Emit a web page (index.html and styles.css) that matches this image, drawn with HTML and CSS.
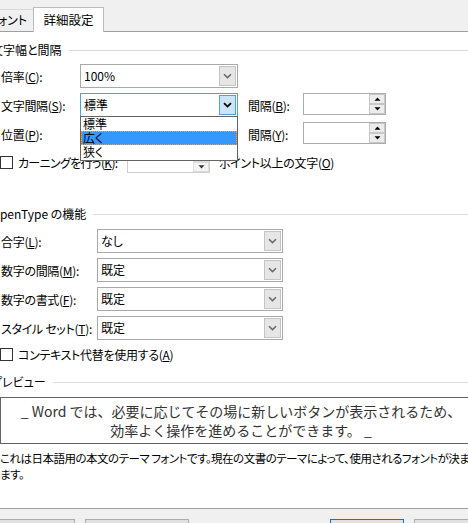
FILE: index.html
```html
<!DOCTYPE html>
<html lang="ja">
<head>
<meta charset="utf-8">
<title>フォント - 詳細設定</title>
<link rel="stylesheet" href="styles.css">
</head>
<body>
<div class="dialog">
  <div class="tabs">
    <div class="tab first">フォント</div>
    <div class="tab active">詳細設定</div>
  </div>

  <div class="panel">
    <div class="heading"><span>文字幅と間隔</span></div>

    <div class="row r-first">
      <span class="lbl w1">倍率(<u>C</u>):</span>
      <div class="combo c1"><span class="val">100%</span><span class="btn"><svg width="9" height="6" viewBox="0 0 9 6"><path d="M1 1.2 L4.5 4.6 L8 1.2" fill="none" stroke="#6b6b6b" stroke-width="1.6"/></svg></span></div>
    </div>

    <div class="row">
      <span class="lbl w1">文字間隔(<u>S</u>):</span>
      <div class="combo c1 focus"><span class="val">標準</span><span class="btn"><svg width="9" height="6" viewBox="0 0 9 6"><path d="M1 1.2 L4.5 4.6 L8 1.2" fill="none" stroke="#000" stroke-width="1.8"/></svg></span>
        <ul class="list">
          <li>標準</li>
          <li class="sel">広く</li>
          <li>狭く</li>
        </ul>
      </div>
      <span class="lbl w2">間隔(<u>B</u>):</span>
      <div class="spin">
        <span class="spinbtns">
          <span class="sb"><svg width="7" height="4" viewBox="0 0 7 4"><path d="M0.5 3.8 L3.5 0.5 L6.5 3.8Z" fill="#000"/></svg></span>
          <span class="sb"><svg width="7" height="4" viewBox="0 0 7 4"><path d="M0.5 0.2 L3.5 3.5 L6.5 0.2Z" fill="#000"/></svg></span>
        </span>
      </div>
    </div>

    <div class="row">
      <span class="lbl w1">位置(<u>P</u>):</span>
      <div class="combo c1"><span class="val">標準</span><span class="btn"><svg width="9" height="6" viewBox="0 0 9 6"><path d="M1 1.2 L4.5 4.6 L8 1.2" fill="none" stroke="#6b6b6b" stroke-width="1.6"/></svg></span></div>
      <span class="lbl w2">間隔(<u>Y</u>):</span>
      <div class="spin">
        <span class="spinbtns">
          <span class="sb"><svg width="7" height="4" viewBox="0 0 7 4"><path d="M0.5 3.8 L3.5 0.5 L6.5 3.8Z" fill="#000"/></svg></span>
          <span class="sb"><svg width="7" height="4" viewBox="0 0 7 4"><path d="M0.5 0.2 L3.5 3.5 L6.5 0.2Z" fill="#000"/></svg></span>
        </span>
      </div>
    </div>

    <div class="row kern">
      <span class="checklabel"><span class="check"></span><span class="kt">カーニングを行う(<u>K</u>):</span></span>
      <div class="spin disabled">
        <span class="spinbtns">
          <span class="sb"><svg width="7" height="4" viewBox="0 0 7 4"><path d="M0.5 3.8 L3.5 0.5 L6.5 3.8Z" fill="#333"/></svg></span>
          <span class="sb"><svg width="7" height="4" viewBox="0 0 7 4"><path d="M0.5 0.2 L3.5 3.5 L6.5 0.2Z" fill="#333"/></svg></span>
        </span>
      </div>
      <span class="pt">ポイント以上の文字(<u>O</u>)</span>
    </div>

    <div class="heading h2"><span>OpenType の機能</span></div>

    <div class="row r-first2">
      <span class="lbl w3">合字(<u>L</u>):</span>
      <div class="combo c2"><span class="val">なし</span><span class="btn"><svg width="9" height="6" viewBox="0 0 9 6"><path d="M1 1.2 L4.5 4.6 L8 1.2" fill="none" stroke="#6b6b6b" stroke-width="1.6"/></svg></span></div>
    </div>
    <div class="row">
      <span class="lbl w3">数字の間隔(<u>M</u>):</span>
      <div class="combo c2"><span class="val">既定</span><span class="btn"><svg width="9" height="6" viewBox="0 0 9 6"><path d="M1 1.2 L4.5 4.6 L8 1.2" fill="none" stroke="#6b6b6b" stroke-width="1.6"/></svg></span></div>
    </div>
    <div class="row">
      <span class="lbl w3">数字の書式(<u>F</u>):</span>
      <div class="combo c2"><span class="val">既定</span><span class="btn"><svg width="9" height="6" viewBox="0 0 9 6"><path d="M1 1.2 L4.5 4.6 L8 1.2" fill="none" stroke="#6b6b6b" stroke-width="1.6"/></svg></span></div>
    </div>
    <div class="row">
      <span class="lbl w3">スタイル セット(<u>T</u>):</span>
      <div class="combo c2"><span class="val">既定</span><span class="btn"><svg width="9" height="6" viewBox="0 0 9 6"><path d="M1 1.2 L4.5 4.6 L8 1.2" fill="none" stroke="#6b6b6b" stroke-width="1.6"/></svg></span></div>
    </div>

    <div class="ctx"><span class="check"></span>コンテキスト代替を使用する(<u>A</u>)</div>

    <div class="heading h3"><span>プレビュー</span></div>

    <div class="preview">
      <div>_ Word では、必要に応じてその場に新しいボタンが表示されるため、</div>
      <div>効率よく操作を進めることができます。 _</div>
    </div>

    <div class="desc">
      <div>これは日本語用の本文のテーマ フォントです。現在の文書のテーマによって、使用されるフォントが決まり</div>
      <div>ます。</div>
    </div>
  </div>

  <div class="footer">
    <button class="b b1" type="button"></button>
    <button class="b b2" type="button"></button>
    <button class="b b3" type="button"></button>
    <button class="b b4" type="button"></button>
  </div>
</div>
</body>
</html>
```

FILE: styles.css
```css
* { box-sizing: border-box; }
html, body { margin: 0; padding: 0; }
body {
  width: 468px;
  height: 523px;
  overflow: hidden;
  background: #fff;
  font-family: "Noto Sans CJK JP", "Noto Sans", sans-serif;
  font-size: 12px;
  color: #000;
  font-feature-settings: "palt";
}
u { text-decoration: underline; text-underline-offset: 1px; }

.dialog { display: flex; flex-direction: column; height: 523px; }

/* tabs */
.tabs {
  flex: none;
  height: 32px;
  background: #f0f0f0;
  border-bottom: 1px solid #a0a0a0;
  display: flex;
  align-items: flex-end;
}
.tab {
  flex: none;
  height: 22px;
  border: 1px solid #d9d9d9;
  border-bottom: none;
  line-height: 20px;
  white-space: nowrap;
}
.tab.first {
  width: 51px;
  margin-left: -17px;
  text-align: right;
  padding-right: 6px;
}
.tab.active {
  position: relative;
  z-index: 1;
  width: 71px;
  height: 25px;
  margin-left: -1px;
  margin-bottom: -1px;
  background: #fff;
  border-color: #bdbdbd;
  text-align: center;
  line-height: 24px;
  font-size: 12.5px;
}

/* panel */
.panel {
  flex: 1;
  position: relative;
  padding: 11px 0 0 1px;
  overflow: hidden;
}
.heading {
  display: flex;
  align-items: center;
  height: 14px;
  line-height: 14px;
  margin-left: -10px;
  white-space: nowrap;
}
.heading::after {
  content: "";
  flex: 1;
  border-top: 1px solid #dcdcdc;
  margin-left: 7px;
}
.heading.h2 { margin-top: 34px; }
.heading.h3 { margin-top: 14px; }

.row {
  display: flex;
  align-items: center;
  height: 24px;
  margin-top: 5px;
}
.row.r-first { margin-top: 7px; }
.row.r-first2 { margin-top: 8px; }

.lbl { flex: none; white-space: nowrap; letter-spacing: -0.3px; }
.w1 { width: 79px; }
.w2 { width: 55px; margin-left: 10px; }
.w3 { width: 96px; }

.combo {
  position: relative;
  flex: none;
  height: 24px;
  border: 1px solid #a9a9a9;
  background: #fff;
  display: flex;
  align-items: stretch;
}
.c1 { width: 158px; }
.c2 { width: 186px; }
.combo .val {
  flex: 1;
  padding-left: 3px;
  line-height: 22px;
  white-space: nowrap;
}
.combo .btn {
  flex: none;
  width: 17px;
  margin: 1px;
  border: 1px solid #c4c4c4;
  background: #e6e6e6;
  display: flex;
  align-items: center;
  justify-content: center;
}
.combo.focus { border-color: #569de5; }
.combo.focus .btn {
  border-color: #569de5;
  background: #cce4f7;
}

.list {
  position: absolute;
  z-index: 5;
  top: 100%;
  left: -1px;
  width: 158px;
  margin: 0;
  padding: 0 0 1px;
  list-style: none;
  background: #fff;
  border: 1px solid #646464;
}
.list li {
  height: 14px;
  line-height: 14px;
  padding-left: 2px;
  white-space: nowrap;
}
.list li.sel {
  background: #3399ff;
  outline: 1px dotted #e9a150;
  outline-offset: -1px;
}

.spin {
  flex: none;
  align-self: flex-start;
  width: 83px;
  height: 22px;
  border: 1px solid #acacac;
  background: #fff;
  display: flex;
  justify-content: flex-end;
}
.spinbtns {
  width: 16px;
  display: flex;
  flex-direction: column;
}
.sb {
  flex: 1;
  border: 1px solid #c8c8c8;
  background: #ececec;
  display: flex;
  align-items: center;
  justify-content: center;
}
.spin.disabled { border-color: #cfcfcf; }
.spin.disabled .sb { border-color: #dddddd; background: #f3f3f3; }

.row.kern { height: 22px; }
.checklabel {
  flex: none;
  width: 127px;
  margin-left: -1px;
  display: flex;
  align-items: center;
  white-space: nowrap;
}
.kt { letter-spacing: -0.7px; }
.check {
  flex: none;
  width: 13px;
  height: 13px;
  border: 1px solid #333;
  background: #fff;
  margin-right: 5px;
}
.pt { margin-left: 9px; white-space: nowrap; letter-spacing: -0.3px; }

.ctx {
  display: flex;
  align-items: center;
  height: 14px;
  margin-top: 7px;
  margin-left: -1px;
  white-space: nowrap;
  letter-spacing: -0.3px;
}

.preview {
  width: 482px;
  height: 47px;
  margin-top: 8px;
  margin-left: -1px;
  border: 1px solid #646464;
  padding-top: 4px;
  text-align: center;
  font-size: 14px;
  line-height: 19px;
  color: #333;
  white-space: nowrap;
  font-feature-settings: normal;
}

.desc {
  margin-top: 6px;
  margin-left: -1px;
  font-size: 11.5px;
  letter-spacing: -0.5px;
  line-height: 16px;
  white-space: nowrap;
}

/* footer */
.footer {
  flex: none;
  height: 15px;
  border-top: 1px solid #a0a0a0;
  background: #f0f0f0;
  padding-top: 10px;
  display: flex;
  overflow: hidden;
}
.b {
  appearance: none;
  flex: none;
  height: 23px;
  padding: 0;
  margin: 0;
  border: 1px solid #adadad;
  background: #e1e1e1;
  font: inherit;
}
.b1 { width: 95px; margin-left: -20px; }
.b2 { width: 104px; margin-left: 10px; }
.b3 { width: 74px; margin-left: 141px; border-color: #0078d7; }
.b4 { width: 75px; margin-left: 10px; }
```
